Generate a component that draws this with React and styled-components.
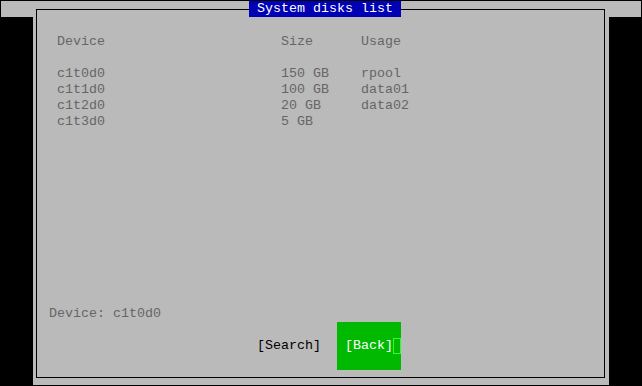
import styled, { createGlobalStyle } from 'styled-components';

const GlobalStyle = createGlobalStyle`
  html, body {
    margin: 0;
    padding: 0;
    background: #000;
  }
  body {
    font-family: 'Liberation Mono', 'DejaVu Sans Mono', monospace;
    font-size: 13.33px;
    line-height: 16px;
  }
`;

const Screen = styled.div`
  width: 642px;
  height: 386px;
  box-sizing: border-box;
  padding: 1px;
  background: #000;
`;

// top terminal row is grey across the whole width, the rest is black
const Desktop = styled.div`
  height: 384px;
  background: linear-gradient(#bababa 16px, #000 16px);
  display: flex;
  justify-content: center;
`;

const Window = styled.div`
  width: 576px;
  box-sizing: border-box;
  padding: 8px 4px 7px 3px;
  background: #bababa;
  display: flex;
`;

const Frame = styled.div`
  position: relative;
  flex: 1;
  border: 1px solid #000;
  display: flex;
  flex-direction: column;
  padding: 24px 0 7px;
`;

const Title = styled.div`
  position: absolute;
  top: -9px;
  left: 212px;
  width: 152px;
  height: 16px;
  background: #0000b4;
  color: #fff;
  white-space: pre;
`;

const Table = styled.div`
  display: grid;
  grid-template-columns: 224px 80px 1fr;
  grid-auto-rows: 16px;
  padding-left: 20px;
  color: #666;
  white-space: pre;
`;

const Gap = styled.div`
  grid-column: 1 / -1;
`;

const Spacer = styled.div`
  flex: 1;
`;

const Status = styled.div`
  height: 16px;
  padding-left: 12px;
  color: #666;
  white-space: pre;
`;

const ButtonRow = styled.div`
  height: 48px;
  display: flex;
  align-items: center;
  padding-left: 220px;
  gap: 16px;
`;

const Button = styled.div`
  display: flex;
  align-items: center;
  height: ${p => (p.$active ? '48px' : '16px')};
  width: 64px;
  box-sizing: border-box;
  padding-left: ${p => (p.$active ? '8px' : '0')};
  background: ${p => (p.$active ? '#00b900' : 'transparent')};
  color: ${p => (p.$active ? '#fff' : '#000')};
  white-space: pre;
`;

const Cursor = styled.span`
  width: 8px;
  height: 16px;
  box-sizing: border-box;
  border: 1px solid #2bff2b;
`;

const disks = [
  { device: 'c1t0d0', size: '150 GB', usage: 'rpool' },
  { device: 'c1t1d0', size: '100 GB', usage: 'data01' },
  { device: 'c1t2d0', size: '20 GB', usage: 'data02' },
  { device: 'c1t3d0', size: '5 GB', usage: '' },
];

export default function App() {
  return (
    <Screen>
      <GlobalStyle />
      <Desktop>
        <Window>
          <Frame>
            <Title> System disks list </Title>
            <Table>
              <span>Device</span>
              <span>Size</span>
              <span>Usage</span>
              <Gap />
              {disks.map(d => [
                <span key={d.device + 'd'}>{d.device}</span>,
                <span key={d.device + 's'}>{d.size}</span>,
                <span key={d.device + 'u'}>{d.usage}</span>,
              ])}
            </Table>
            <Spacer />
            <Status>Device: c1t0d0</Status>
            <ButtonRow>
              <Button>[Search]</Button>
              <Button $active>
                [Back]
                <Cursor />
              </Button>
            </ButtonRow>
          </Frame>
        </Window>
      </Desktop>
    </Screen>
  );
}
